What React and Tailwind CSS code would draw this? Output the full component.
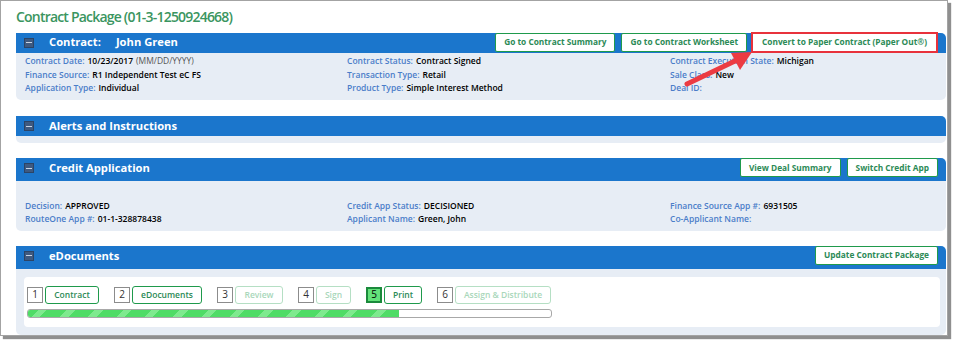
import React from 'react';

const font = { fontFamily: '"Open Sans", "Liberation Sans", sans-serif' };

const Toggle = () => (
  <span className="w-[10px] h-[10px] bg-[#3f5a80] border border-[#2c4466] flex items-center justify-center">
    <span className="w-[6px] h-[1px] bg-[#c9d4e4]" />
  </span>
);

const HeaderBtn = ({ children }) => (
  <button className="h-[19px] px-[8px] bg-white border border-[#1f9a4c] rounded-[2px] text-[8.3px] font-bold text-[#2c8a56] leading-none">
    {children}
  </button>
);

const Field = ({ label, value, hint }) => (
  <div className="h-[13.5px] flex items-center text-[8.5px] font-semibold whitespace-nowrap">
    <span className="text-[#4b7dc9]">{label}</span>
    <span className="text-black ml-[3px]">{value}</span>
    {hint && <span className="text-[#555] font-normal ml-[3px]">{hint}</span>}
  </div>
);

const Section = ({ title, name, buttons, tall, children, bodyClass }) => (
  <div>
    <div className={`${tall ? 'h-[23px]' : 'h-[20px]'} bg-[#1b76cc] rounded-tr-[5px] flex items-start pl-[8px] pr-[8px]`}>
      <div className="h-[20px] flex items-center">
        <Toggle />
        <span className="ml-[15px] text-white text-[11.2px] font-bold">{title}</span>
        {name && <span className="ml-[15px] text-white text-[11.2px] font-bold">{name}</span>}
      </div>
      <div className="ml-auto flex gap-[6px]">{buttons}</div>
    </div>
    <div className={`bg-[#e7edf5] rounded-b-[5px] ${bodyClass}`}>{children}</div>
  </div>
);

const Step = ({ n, label, state, w }) => {
  const active = state !== 'off';
  return (
    <div className="flex items-center gap-[2px]">
      <span
        className={`w-[16px] h-[16px] flex items-center justify-center text-[10px] ${
          state === 'current'
            ? 'bg-[#63e27a] border-2 border-[#1b8a3c] text-black'
            : 'border border-[#8c8c8c] text-[#333]'
        }`}
      >
        {n}
      </span>
      <span
        className={`h-[18px] flex items-center justify-center rounded-[3px] border text-[8.5px] font-semibold ${
          active ? 'border-[#1f9a4c] text-[#2c8a56]' : 'border-[#b5dfc4] text-[#a9d7ba]'
        }`}
        style={{ width: w }}
      >
        {label}
      </span>
    </div>
  );
};

export default function App() {
  return (
    <div className="w-[955px] h-[343px] bg-white" style={font}>
      <div className="relative w-[948px] h-[336px] border border-[#a3a3a3] shadow-[3px_3px_1px_#8f8f8f] overflow-hidden flex flex-col pl-[15px] pr-[1px]">
        <h1 className="h-[32px] pt-[4px] text-[14px] tracking-[-0.8px] font-semibold text-[#3a9560] leading-[24px]">
          Contract Package (01-3-1250924668)
        </h1>

        <Section
          title="Contract:"
          name="John Green"
          buttons={[
            <HeaderBtn key="a">Go to Contract Summary</HeaderBtn>,
            <HeaderBtn key="b">Go to Contract Worksheet</HeaderBtn>,
            <span key="c" className="border-2 border-[#e8323c] -mt-[1px] -ml-[2px] h-[21px] flex">
              <button className="h-[17px] px-[9px] bg-white text-[8.3px] font-bold text-[#2c8a56]">
                Convert to Paper Contract (Paper Out®)
              </button>
            </span>,
          ]}
          bodyClass="h-[47px] pt-[2px] pl-[9px] grid grid-cols-[322px_323px_1fr]"
        >
          <div>
            <Field label="Contract Date:" value="10/23/2017" hint="(MM/DD/YYYY)" />
            <Field label="Finance Source:" value="R1 Independent Test eC FS" />
            <Field label="Application Type:" value="Individual" />
          </div>
          <div>
            <Field label="Contract Status:" value="Contract Signed" />
            <Field label="Transaction Type:" value="Retail" />
            <Field label="Product Type:" value="Simple Interest Method" />
          </div>
          <div>
            <Field label="Contract Execution State:" value="Michigan" />
            <Field label="Sale Class:" value="New" />
            <Field label="Deal ID:" value="" />
          </div>
        </Section>

        <div className="h-[17px]" />
        <Section title="Alerts and Instructions" bodyClass="h-[7px]" />

        <div className="h-[15px]" />
        <Section
          title="Credit Application"
          tall
          buttons={[
            <HeaderBtn key="a">View Deal Summary</HeaderBtn>,
            <HeaderBtn key="b">Switch Credit App</HeaderBtn>,
          ]}
          bodyClass="h-[50px] pt-[18px] pl-[9px] grid grid-cols-[322px_323px_1fr]"
        >
          <div>
            <Field label="Decision:" value="APPROVED" />
            <Field label="RouteOne App #:" value="01-1-328878438" />
          </div>
          <div>
            <Field label="Credit App Status:" value="DECISIONED" />
            <Field label="Applicant Name:" value="Green, John" />
          </div>
          <div>
            <Field label="Finance Source App #:" value="6931505" />
            <Field label="Co-Applicant Name:" value="" />
          </div>
        </Section>

        <div className="h-[15px]" />
        <Section
          title="eDocuments"
          tall
          buttons={[<HeaderBtn key="a">Update Contract Package</HeaderBtn>]}
          bodyClass="h-[66px] pt-[8px] pl-[8px] pr-[6px]"
        >
          <div className="h-[50px] bg-white rounded-[4px] pt-[9px] pl-[3px]">
            <div className="flex gap-[15px]">
              <Step n="1" label="Contract" state="done" w={54} />
              <Step n="2" label="eDocuments" state="done" w={70} />
              <Step n="3" label="Review" state="off" w={48} />
              <Step n="4" label="Sign" state="off" w={35} />
              <Step n="5" label="Print" state="current" w={38} />
              <Step n="6" label="Assign & Distribute" state="off" w={96} />
            </div>
            <div className="mt-[5px] w-[525px] h-[9px] rounded-[3px] border border-[#a8a8a8] bg-white overflow-hidden">
              <div className="w-[371px] h-full bg-[repeating-linear-gradient(-45deg,#4fdc66_0px,#4fdc66_14px,#7eea8e_14px,#7eea8e_20px)]" />
            </div>
          </div>
        </Section>

        <svg className="absolute left-0 top-0 pointer-events-none" width="948" height="336">
          <line x1="686" y1="83" x2="734" y2="60" stroke="#ec3b42" strokeWidth="5" strokeLinecap="round" />
          <polygon points="751,51 730,52 739,69" fill="#ec3b42" />
        </svg>
      </div>
    </div>
  );
}
